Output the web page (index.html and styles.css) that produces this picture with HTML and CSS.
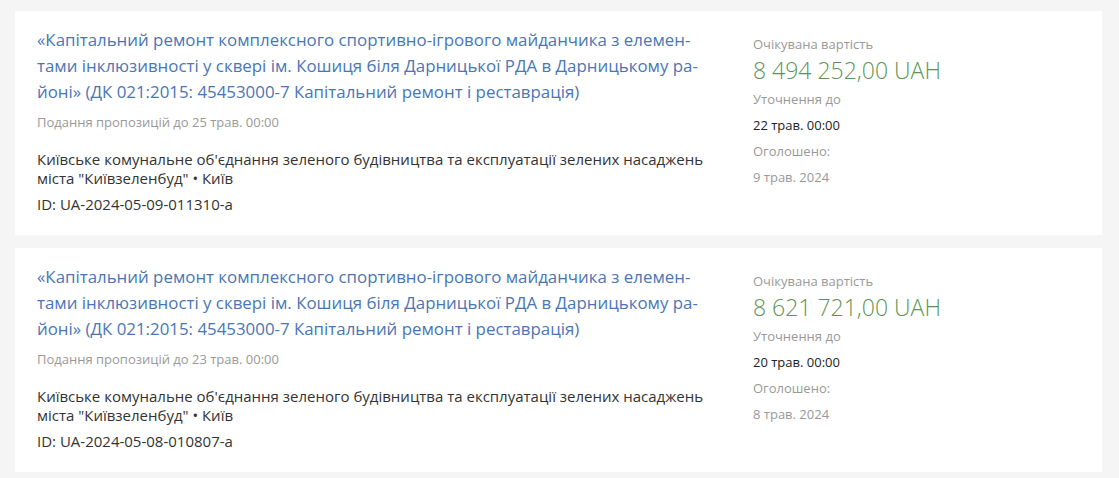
FILE: index.html
```html
<!DOCTYPE html>
<html lang="uk">
<head>
<meta charset="utf-8">
<link rel="stylesheet" href="styles.css">
</head>
<body>
<div class="list">
  <div class="card">
    <div class="main">
      <a class="title" href="#">«Капітальний ремонт комплексного спортивно-ігрового майданчика з елемен&shy;тами інклюзивності у сквері ім. Кошиця біля Дарницької РДА в Дарницькому ра&shy;йоні» (ДК 021:2015: 45453000-7 Капітальний ремонт і реставрація)</a>
      <div class="deadline">Подання пропозицій до 25 трав. 00:00</div>
      <div class="org">Київське комунальне об'єднання зеленого будівництва та експлуатації зелених насаджень міста "Київзеленбуд" • Київ</div>
      <div class="id">ID: UA-2024-05-09-011310-a</div>
    </div>
    <div class="side">
      <div class="label first">Очікувана вартість</div>
      <div class="price">8 494 252,00 UAH</div>
      <div class="label">Уточнення до</div>
      <div class="value">22 трав. 00:00</div>
      <div class="label">Оголошено:</div>
      <div class="label">9 трав. 2024</div>
    </div>
  </div>
  <div class="card">
    <div class="main">
      <a class="title" href="#">«Капітальний ремонт комплексного спортивно-ігрового майданчика з елемен&shy;тами інклюзивності у сквері ім. Кошиця біля Дарницької РДА в Дарницькому ра&shy;йоні» (ДК 021:2015: 45453000-7 Капітальний ремонт і реставрація)</a>
      <div class="deadline">Подання пропозицій до 23 трав. 00:00</div>
      <div class="org">Київське комунальне об'єднання зеленого будівництва та експлуатації зелених насаджень міста "Київзеленбуд" • Київ</div>
      <div class="id">ID: UA-2024-05-08-010807-a</div>
    </div>
    <div class="side">
      <div class="label first">Очікувана вартість</div>
      <div class="price">8 621 721,00 UAH</div>
      <div class="label">Уточнення до</div>
      <div class="value">20 трав. 00:00</div>
      <div class="label">Оголошено:</div>
      <div class="label">8 трав. 2024</div>
    </div>
  </div>
</div>
</body>
</html>
```

FILE: styles.css
```css
html, body {
  margin: 0;
  padding: 0;
  background: #f5f5f5;
}
body {
  font-family: "Open Sans", "Noto Sans", sans-serif;
  color: #333;
}
.list {
  display: flex;
  flex-direction: column;
  gap: 13px;
  padding: 11px 17px 0 15px;
}
.card {
  background: #fff;
  display: grid;
  grid-template-columns: 680px 1fr;
  column-gap: 36px;
  padding: 16px 22px 21px 22px;
}
.main {
  display: flex;
  flex-direction: column;
}
.title {
  font-size: 16.88px;
  line-height: 26px;
  color: #4a76b6;
  text-decoration: none;
}
.deadline {
  margin-top: 8px;
  font-size: 13px;
  line-height: 18px;
  color: #999;
}
.org {
  margin-top: 19px;
  font-size: 15px;
  line-height: 19px;
  color: #333;
}
.id {
  margin-top: 6px;
  font-size: 15px;
  line-height: 20px;
  color: #333;
}
.side {
  display: flex;
  flex-direction: column;
}
.label {
  font-size: 13px;
  line-height: 26px;
  color: #999;
}
.label.first {
  margin-top: 8px;
  line-height: 18px;
}
.price {
  margin-top: 1px;
  font-size: 23px;
  font-weight: 300;
  line-height: 32px;
  color: #5e9556;
}
.value {
  font-size: 13px;
  line-height: 26px;
  color: #222;
}
```
